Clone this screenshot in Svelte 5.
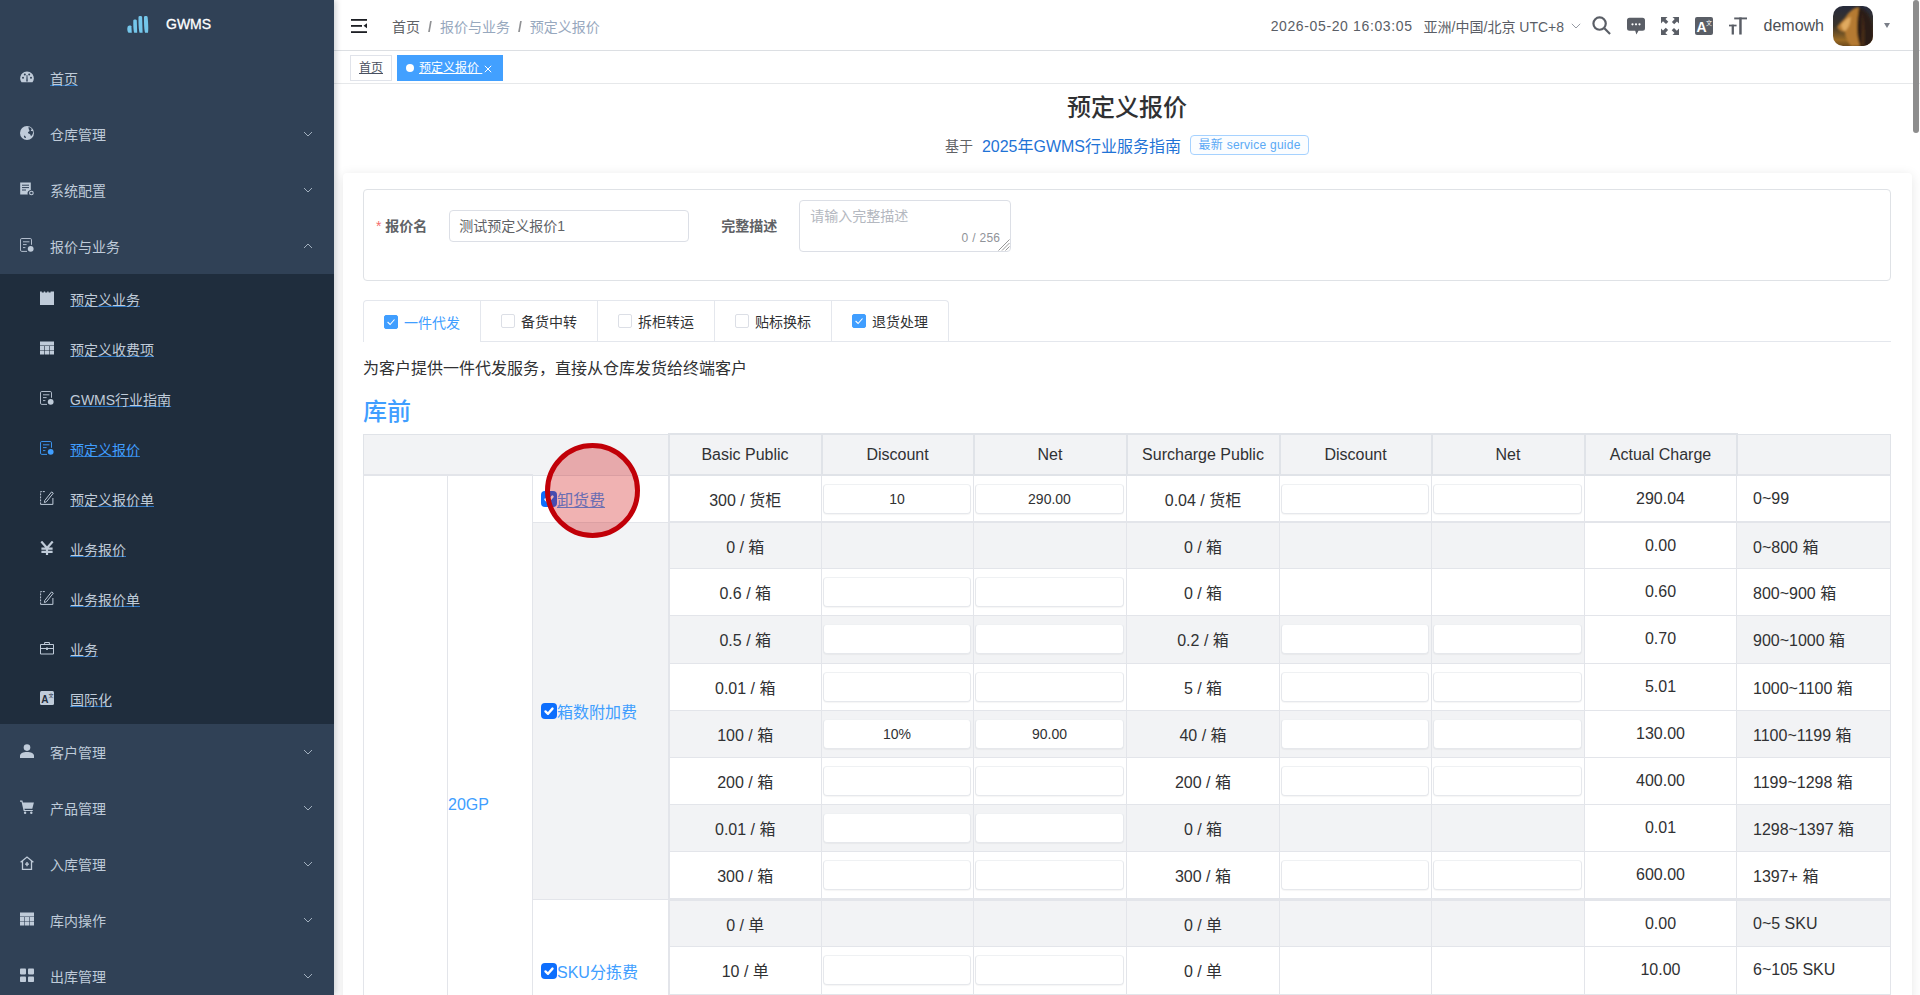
<script lang="ts">
  const topMenu = [
    { label: '首页', icon: 'gauge', link: true },
    { label: '仓库管理', icon: 'globe', arrow: 'down' },
    { label: '系统配置', icon: 'docgear', arrow: 'down' },
    { label: '报价与业务', icon: 'docline', arrow: 'up' }
  ];
  const subMenu = [
    { label: '预定义业务', icon: 'calendar' },
    { label: '预定义收费项', icon: 'grid' },
    { label: 'GWMS行业指南', icon: 'docline' },
    { label: '预定义报价', icon: 'docline', active: true },
    { label: '预定义报价单', icon: 'edit' },
    { label: '业务报价', icon: 'yen' },
    { label: '业务报价单', icon: 'edit' },
    { label: '业务', icon: 'case' },
    { label: '国际化', icon: 'lang' }
  ];
  const bottomMenu = [
    { label: '客户管理', icon: 'user' },
    { label: '产品管理', icon: 'cart' },
    { label: '入库管理', icon: 'house' },
    { label: '库内操作', icon: 'grid' },
    { label: '出库管理', icon: 'blocks' }
  ];
  const tabs = [
    { label: '一件代发', checked: true, active: true },
    { label: '备货中转' },
    { label: '拆柜转运' },
    { label: '贴标换标' },
    { label: '退货处理', checked: true }
  ];
  const columns = ['Basic Public', 'Discount', 'Net', 'Surcharge Public', 'Discount', 'Net', 'Actual Charge', ''];

  interface Row {
    basic: string;
    disc?: string;
    net?: string;
    sur: string;
    actual: string;
    range: string;
    grey?: boolean;
  }
  const blank = (grey: boolean): Row => ({ basic: '', sur: '', actual: '', range: '', grey });
  const groups: { name: string; grey?: boolean; hot?: boolean; rows: Row[] }[] = [
    {
      name: '卸货费',
      hot: true,
      rows: [{ basic: '300 / 货柜', disc: '10', net: '290.00', sur: '0.04 / 货柜', actual: '290.04', range: '0~99' }]
    },
    {
      name: '箱数附加费',
      grey: true,
      rows: [
        { basic: '0 / 箱', sur: '0 / 箱', actual: '0.00', range: '0~800 箱', grey: true },
        { basic: '0.6 / 箱', sur: '0 / 箱', actual: '0.60', range: '800~900 箱' },
        { basic: '0.5 / 箱', sur: '0.2 / 箱', actual: '0.70', range: '900~1000 箱', grey: true },
        { basic: '0.01 / 箱', sur: '5 / 箱', actual: '5.01', range: '1000~1100 箱' },
        { basic: '100 / 箱', disc: '10%', net: '90.00', sur: '40 / 箱', actual: '130.00', range: '1100~1199 箱', grey: true },
        { basic: '200 / 箱', sur: '200 / 箱', actual: '400.00', range: '1199~1298 箱' },
        { basic: '0.01 / 箱', sur: '0 / 箱', actual: '0.01', range: '1298~1397 箱', grey: true },
        { basic: '300 / 箱', sur: '300 / 箱', actual: '600.00', range: '1397+ 箱' }
      ]
    },
    {
      name: 'SKU分拣费',
      rows: [
        { basic: '0 / 单', sur: '0 / 单', actual: '0.00', range: '0~5 SKU', grey: true },
        { basic: '10 / 单', sur: '0 / 单', actual: '10.00', range: '6~105 SKU' },
        blank(true)
      ]
    },
    { name: '', rows: [blank(false), blank(true)] }
  ];
  const totalRows = groups.reduce((n, g) => n + g.rows.length, 0);
  const hasInput = (v: string) => v !== '' && !v.startsWith('0 /');
</script>

{#snippet icon(name)}
  <svg class="icon" viewBox="0 0 14 14" fill="currentColor">
    {#if name === 'gauge'}
      <path d="M7 1.5C3.2 1.5.2 4.6.2 8.3c0 1.5.5 2.9 1.3 4h11c.8-1.1 1.3-2.5 1.3-4 0-3.7-3-6.800-6.800-6.800z" />
      <g fill="#304156"><circle cx="3" cy="7.8" r="1" /><circle cx="4.8" cy="4.6" r="1" /><circle cx="9.2" cy="4.6" r="1" /><circle cx="11" cy="7.8" r="1" /><path d="M6.2 11.6 6.6 5h.8l.4 6.6z" /></g>
    {:else if name === 'globe'}
      <circle cx="7" cy="7" r="7" />
      <path fill="#304156" d="M8.5 1c1.5.3 2.7 1.100 3.500 2.300-.8.3-1.300.7-1.100 1.300.3.7 1.500.6 2.300 1 .1 1.900-.8 3.500-2.200 4.600-.4-1-.4-1.800-1.300-2.300-.8-.4-1.500-.3-1.700-1-.2-.6.4-1 1-1.300.6-.3.6-.9.2-1.500-.3-.6-.7-1.400-.7-3.100z" />
      <path fill="#304156" d="M4 9.500c1 .3 1.800.9 2 2.200-.6.3-1.300.3-1.700-.2-.4-.5-.5-1.200-.3-2z" />
    {:else if name === 'docgear'}
      <path d="M.2 .6h10.600v7.300a3.300 3.300 0 0 0-3 4.700H.2z" />
      <path stroke="#304156" stroke-width="1" d="M2 3.200h7M2 5.600h7M2 8h4" />
      <circle cx="11.400" cy="11" r="1.800" fill="none" stroke="currentColor" stroke-width="1.100" />
    {:else if name === 'docline'}
      <path fill="none" stroke="currentColor" stroke-width=".9" d="M7 13.400H1.800a1.300 1.300 0 0 1-1.300-1.300V1.800A1.300 1.300 0 0 1 1.800.5h8.400a1.300 1.300 0 0 1 1.300 1.300v5M3 3.800h6.400M3 6.600h3.600M3 9.600h2.400" />
      <circle cx="10.700" cy="10.800" r="2.900" />
    {:else if name === 'calendar'}
      <path d="M0 .4h1.800v1.200h2V.4h1.400v1.200h2V.4h1.400v1.200h2V.4H14v13.600H0z" />
    {:else if name === 'grid'}
      <path d="M0 .5h14v3.900H0zM0 5h4.400v4H0zM5 5h4v4H5zM9.600 5H14v4H9.600zM0 9.600h4.400v3.900H0zM5 9.600h4v3.900H5zM9.600 9.600H14v3.900H9.600z" />
    {:else if name === 'edit'}
      <path fill="none" stroke="currentColor" stroke-width="1" stroke-dasharray="2 1" d="M.6 13.400V.6h5" />
      <path fill="none" stroke="currentColor" stroke-width="1" d="M.6 13.400h12.300V7M4.700 9.600 11.600.9l1.700 1.300-7 8.700-1.900.6z" />
    {:else if name === 'yen'}
      <path fill="none" stroke="currentColor" stroke-width="2.200" d="M1.300.5 7 7 12.700.5M7 7v7M1.400 7.700h11.200M1.400 10.800h11.200" />
    {:else if name === 'case'}
      <path fill="none" stroke="currentColor" stroke-width="1" d="M.5 3.500h13v9.500H.5zM4.600 3.500V1.500h4.800v2M.5 7.500h13" />
      <rect x="6" y="6.500" width="2" height="2.400" />
    {:else if name === 'lang'}
      <rect width="14" height="14" rx="1.500" />
      <text class="lang-a" x="1.200" y="11.600">A</text>
      <text class="lang-b" x="8.400" y="6">文</text>
    {:else if name === 'user'}
      <circle cx="7" cy="3.600" r="3.300" />
      <path d="M0 14v-2.100C0 9.500 3 8 7 8s7 1.500 7 3.900V14z" />
    {:else if name === 'cart'}
      <path d="M0 .6h2.400l.5 1.800h11l-1.600 6.300H4.400l.4 1.200h8v1.200H3.700L1.500 1.800H0z" />
      <circle cx="5.100" cy="12.700" r="1.200" /><circle cx="11.300" cy="12.700" r="1.200" />
    {:else if name === 'house'}
      <path fill="none" stroke="currentColor" stroke-width="1.300" d="M.6 6.200 7 1l6.400 5.200M2.500 5v8.300h9V5" />
      <path d="M5 7.500h4v1.300H5zM6.300 6h1.400v4.200H6.300z" />
    {:else if name === 'blocks'}
      <rect width="6" height="6" y=".4" rx=".8" /><rect x="8" y=".4" width="6" height="6" rx=".8" />
      <rect y="8.400" width="6" height="5.600" rx=".8" /><rect x="8" y="8.400" width="6" height="5.600" rx=".8" />
    {/if}
  </svg>
{/snippet}

{#snippet menuItem(item)}
  <div class="menu-item">
    {@render icon(item.icon)}
    <span class:linked={item.link}>{item.label}</span>
    {#if item.arrow === 'up'}
      <svg class="arrow" viewBox="0 0 10 6" fill="none" stroke="currentColor"><path d="M1 5l4-4 4 4" /></svg>
    {:else if item.arrow !== undefined}
      <svg class="arrow" viewBox="0 0 10 6" fill="none" stroke="currentColor"><path d="M1 1l4 4 4-4" /></svg>
    {/if}
  </div>
{/snippet}

{#snippet tick()}
  <span class="tick"><svg viewBox="0 0 16 16" fill="none" stroke="#fff" stroke-width="2.400" stroke-linecap="round" stroke-linejoin="round"><path d="M4.500 8.400l2.500 2.400 4.500-5.200" /></svg></span>
{/snippet}

<div class="app">
  <aside class="sidebar">
    <div class="logo">
      <svg class="logo-mark" viewBox="0 0 22 17" fill="#74c6ea">
        <path d="M.8 10.500c.8-1.100 3.400-1.300 3.600-.2l.4 6.400H1.600C.5 16.700-.3 12.500.8 10.500z" />
        <path d="M6.300 4.500c0-1.200 3.300-1.400 3.500 0l.4 12.200H7.200c-.9-2.600-1-9.200-.9-12.200z" />
        <path d="M11.500 1c0-1.200 3.400-1.300 3.600 0l.5 15.700h-3c-1-3-1.200-12-1.100-15.700z" />
        <path d="M17 1c0-1.200 3.400-1.300 3.600 0 .5 4 1 11.500.4 15.700h-2.900c-1-3-1.200-12-1.100-15.700z" />
      </svg>
      <span>GWMS</span>
    </div>
    {#each topMenu as item}
      {@render menuItem(item)}
    {/each}
    <div class="submenu">
      {#each subMenu as item}
        <div class="sub-item" class:active={item.active}>
          {@render icon(item.icon)}
          <span>{item.label}</span>
        </div>
      {/each}
    </div>
    {#each bottomMenu as item}
      {@render menuItem({ ...item, arrow: 'down' })}
    {/each}
  </aside>

  <div class="main">
    <header class="navbar">
      <svg class="hamburger" viewBox="0 0 16 14" fill="#1d1f24">
        <rect width="16" height="1.800" /><rect y="6" width="11" height="1.800" /><rect y="12.200" width="16" height="1.800" />
        <path d="M16 4.200v5l-3.500-2.500z" />
      </svg>
      <nav class="crumbs">
        <span class="crumb-home">首页</span><i>/</i><span>报价与业务</span><i>/</i><span>预定义报价</span>
      </nav>
      <div class="nav-right">
        <span class="clock">2026-05-20 16:03:05</span>
        <span class="zone">亚洲/中国/北京 UTC+8</span>
        <svg class="zone-arrow" viewBox="0 0 10 6" fill="none" stroke="currentColor"><path d="M.8 .8 5 5 9.200 .8" /></svg>
        <svg class="tool search" viewBox="0 0 20 20" fill="none" stroke="#5a5e66" stroke-width="2.300">
          <circle cx="8" cy="8" r="6.500" /><path d="M13 13l6 6" />
        </svg>
        <svg class="tool" viewBox="0 0 18 18" fill="#5a5e66">
          <path d="M2.500 .8h13a2.500 2.500 0 0 1 2.500 2.500v8a2.500 2.500 0 0 1-2.500 2.500h-4L9.400 17.600 8.200 13.800H2.500A2.500 2.500 0 0 1 0 11.300v-8A2.500 2.500 0 0 1 2.500 .8z" />
          <g fill="#fff"><circle cx="5.500" cy="7.300" r="1.100" /><circle cx="9" cy="7.300" r="1.100" /><circle cx="12.500" cy="7.300" r="1.100" /></g>
        </svg>
        <svg class="tool" viewBox="0 0 18 18" fill="#5a5e66">
          <path d="M0 0h6.500L4.500 2l2.800 2.800-2.300 2.300L2 4.300 0 6.500zM18 0v6.500L16 4.500l-2.800 2.800-2.300-2.300L13.700 2 11.500 0zM0 18v-6.500L2 13.500l2.800-2.800 2.300 2.300L4.300 16l2.200 2zM18 18h-6.500l2-2-2.800-2.800 2.300-2.300 2.800 2.800 2.200-2.200z" />
        </svg>
        <svg class="tool" viewBox="0 0 18 18">
          <rect width="18" height="18" rx="2" fill="#5a5e66" />
          <text class="tool-a" x="1.600" y="15">A</text>
          <text class="tool-b" x="11" y="7.500">文</text>
        </svg>
        <svg class="tool" viewBox="0 0 19 18" fill="#5a5e66">
          <rect x="5.500" width="13.500" height="2" /><rect x="10.800" width="2.600" height="18" />
          <rect y="7.600" width="8" height="1.800" /><rect x="2.800" y="7.600" width="2.400" height="10.400" />
        </svg>
        <span class="username">demowh</span>
        <svg class="avatar" viewBox="0 0 40 40">
          <defs>
            <linearGradient id="bg" x1="0" y1="0" x2="0" y2="1">
              <stop offset="0" stop-color="#272b3c" /><stop offset=".5" stop-color="#3a3329" /><stop offset=".85" stop-color="#9a6a24" /><stop offset="1" stop-color="#6e4a1c" />
            </linearGradient>
            <filter id="soft"><feGaussianBlur stdDeviation="1" /></filter>
          </defs>
          <rect width="40" height="40" fill="url(#bg)" />
          <g filter="url(#soft)">
            <path fill="#2c1c12" d="M20 2C30 0 42 6 41 42H20z" />
            <path fill="#b57a30" d="M26 1c-6 1-11 6-14 11-3 3-6 6-8 9 2 4 5 5 8 5 0 5 3 10 6 14h9c-2-6-3-12-3-18 0-7 1-14 2-21z" />
            <path fill="#e0aa60" d="M8 19c3-4 6-7 10-8-1 5-1 10-6 14-2 0-3-3-4-6z" />
            <path fill="#4d3018" d="M29 6c2 8 3 22 2 34h-3c1-10 2-24 1-34z" />
          </g>
        </svg>
        <span class="caret"></span>
      </div>
    </header>

    <div class="tagbar">
      <span class="tag">首页</span>
      <span class="tag current"><b></b><u>预定义报价&nbsp;</u><svg viewBox="0 0 8 8" fill="none" stroke="#fff"><path d="M.8 .8l6.400 6.400M7.200 .8.800 7.200" /></svg></span>
    </div>

    <div class="page-head">
      <h1>预定义报价</h1>
      <div class="subtitle">
        <span class="based">基于</span>
        <span class="guide">2025年GWMS行业服务指南</span>
        <span class="guide-tag">最新 service guide</span>
      </div>
    </div>

    <section class="card">
      <div class="form">
        <span class="label"><em>*</em> 报价名</span>
        <div class="input">测试预定义报价1</div>
        <span class="label second">完整描述</span>
        <div class="textarea">
          <span class="placeholder">请输入完整描述</span>
          <span class="count">0 / 256</span>
          <svg class="resize" viewBox="0 0 12 12" stroke="#8a8a8a" stroke-width=".9"><path d="M11.500 .5l-11 11M11.500 4l-7.500 7.500M11.500 7.500l-4 4" /></svg>
        </div>
      </div>

      <div class="tabs">
        {#each tabs as tab}
          <div class="tab" class:active={tab.active}>
            <span class="check" class:on={tab.checked}>
              {#if tab.checked}
                <svg viewBox="0 0 14 14" fill="none" stroke="#fff" stroke-width="1.100"><path d="M3.600 7l2.500 2.500 4.400-5" /></svg>
              {/if}
            </span>
            {tab.label}
          </div>
        {/each}
      </div>

      <p class="intro">为客户提供一件代发服务，直接从仓库发货给终端客户</p>
      <h2>库前</h2>

      <table>
        <colgroup>
          <col style="width:84px" /><col style="width:85px" /><col style="width:136px" />
          <col style="width:153px" /><col style="width:152px" /><col style="width:153px" /><col style="width:153px" />
          <col style="width:152px" /><col style="width:153px" /><col style="width:152px" /><col style="width:154px" />
        </colgroup>
        <thead>
          <tr>
            <th colspan="3"></th>
            {#each columns as c}<th>{c}</th>{/each}
          </tr>
        </thead>
        <tbody>
          {#each groups as group, gi}
            {#each group.rows as row, ri}
              <tr class:striped={row.grey} class:first={ri === 0} class:heavy={ri === 0 && gi === 2}>
                {#if gi === 0 && ri === 0}
                  <td rowspan={totalRows} class="plain"></td>
                  <td rowspan={totalRows} class="plain size">20GP</td>
                {/if}
                {#if ri === 0}
                  <td rowspan={group.rows.length} class="fee" class:shade={group.grey} class:hot={group.hot}>
                    {#if group.name}
                      {@render tick()}<span>{group.name}</span>
                    {/if}
                  </td>
                {/if}
                <td>{row.basic}</td>
                <td class="slot">{#if hasInput(row.basic)}<div class="cell-input">{row.disc ?? ''}</div>{/if}</td>
                <td class="slot">{#if hasInput(row.basic)}<div class="cell-input">{row.net ?? ''}</div>{/if}</td>
                <td>{row.sur}</td>
                <td class="slot">{#if hasInput(row.sur)}<div class="cell-input"></div>{/if}</td>
                <td class="slot">{#if hasInput(row.sur)}<div class="cell-input"></div>{/if}</td>
                <td class="actual">{row.actual}</td>
                <td class="range">{row.range}</td>
              </tr>
            {/each}
          {/each}
        </tbody>
      </table>
    </section>
  </div>

  <div class="ring"></div>
  <div class="scroll-thumb"></div>
</div>

<style>
  :global(body) {
    margin: 0;
    background: #fff;
  }
  .app {
    position: relative;
    display: flex;
    width: 1920px;
    height: 995px;
    overflow: hidden;
    font-family: "Liberation Sans", "Noto Sans CJK SC", sans-serif;
    color: #303133;
  }
  .sidebar {
    flex: 0 0 334px;
    background: #304156;
    color: #bfcbd9;
    font-size: 14px;
    box-shadow: 2px 0 6px rgba(0, 21, 41, 0.2);
    z-index: 2;
  }
  .logo {
    height: 50px;
    display: flex;
    align-items: center;
    padding-left: 127px;
    gap: 17px;
    color: #fff;
    font-weight: 400;
  }
  .logo-mark {
    width: 22px;
    height: 17px;
    margin-top: -1px;
  }
  .logo span {
    margin-top: -2px;
    -webkit-text-stroke: 0.3px #fff;
  }
  .menu-item {
    height: 56px;
    display: flex;
    align-items: center;
    padding-left: 20px;
  }
  .icon {
    width: 14px;
    height: 14px;
    margin-right: 16px;
    flex: none;
    margin-top: -2px;
  }
  .linked,
  .sub-item span {
    text-decoration: underline;
    text-decoration-color: #2f78c4;
    text-underline-offset: 1px;
  }
  .arrow {
    width: 10px;
    height: 6px;
    margin-left: auto;
    margin-right: 21px;
    stroke-width: 0.8;
  }
  .submenu {
    background: #1f2d3d;
  }
  .sub-item {
    height: 50px;
    display: flex;
    align-items: center;
    padding-left: 40px;
  }
  .sub-item.active {
    color: #409eff;
  }
  .lang-a {
    font-size: 10px;
    font-weight: 700;
    fill: #1f2d3d;
  }
  .lang-b {
    font-size: 5px;
    fill: #1f2d3d;
  }

  .main {
    flex: 1;
    min-width: 0;
  }
  .navbar {
    height: 50px;
    border-bottom: 1px solid #dcdfe3;
    display: flex;
    align-items: center;
    font-size: 14px;
  }
  .hamburger {
    width: 16px;
    height: 14px;
    margin-left: 17px;
    margin-top: 2px;
  }
  .crumbs {
    margin-left: 25px;
    margin-top: 1px;
    color: #97a8be;
  }
  .crumbs i {
    font-style: normal;
    color: #606266;
    margin: 0 8px;
    font-weight: 600;
    opacity: 0.7;
  }
  .crumb-home {
    color: #606266;
  }
  .nav-right {
    margin-left: auto;
    display: flex;
    align-items: center;
    color: #5a5e66;
    margin-top: 1px;
  }
  .clock {
    letter-spacing: 0.63px;
  }
  .zone {
    margin-left: 11px;
  }
  .zone-arrow {
    width: 10px;
    height: 6px;
    margin-left: 7px;
    stroke-width: 0.9;
    color: #8a8f98;
  }
  .tool {
    width: 18px;
    height: 18px;
    margin-left: 16px;
  }
  .search {
    margin-left: 11px;
    width: 19px;
    height: 19px;
  }
  .tool-a {
    font-size: 14px;
    font-weight: 700;
    fill: #fff;
  }
  .tool-b {
    font-size: 6px;
    fill: #fff;
  }
  .username {
    font-size: 16px;
    margin-left: 16.5px;
    color: #4c4f55;
  }
  .avatar {
    width: 40px;
    height: 40px;
    border-radius: 10px;
    margin-left: 9px;
  }
  .caret {
    width: 0;
    height: 0;
    border: 3.5px solid transparent;
    border-top: 5px solid #7a7f88;
    border-bottom: 0;
    margin-left: 11px;
    margin-right: 30px;
  }
  .tagbar {
    height: 28px;
    border-bottom: 1px solid #e6e8ea;
    display: flex;
    align-items: flex-start;
    padding: 4px 0 0 16px;
    gap: 5px;
  }
  .tag {
    height: 26px;
    box-sizing: border-box;
    border: 1px solid #e0e3ea;
    font-size: 12px;
    line-height: 24px;
    padding: 0 8px;
    text-decoration: underline;
    color: #495060;
    width: 42px;
    text-align: center;
    white-space: nowrap;
  }
  .tag.current {
    width: 106px;
    background: #42a0ff;
    border-color: #42a0ff;
    color: #fff;
    text-align: left;
    display: flex;
    align-items: center;
    text-decoration: none;
  }
  .tag.current b {
    width: 8px;
    height: 8px;
    border-radius: 50%;
    background: #fff;
    margin-right: 5px;
    flex: none;
  }
  .tag.current svg {
    width: 8px;
    height: 8px;
    margin-left: 2px;
    margin-top: 2px;
  }
  .page-head {
    height: 89px;
    text-align: center;
    padding-top: 10px;
    box-sizing: border-box;
  }
  h1 {
    margin: 0;
    font-size: 24px;
    line-height: 28px;
    font-weight: 500;
    color: #303133;
  }
  .subtitle {
    margin-top: 11px;
    height: 24px;
    display: flex;
    justify-content: center;
    align-items: center;
  }
  .based {
    font-size: 14px;
    color: #606266;
    margin-right: 9px;
  }
  .guide {
    font-size: 16px;
    color: #1f73d6;
    margin-right: 9px;
  }
  .guide-tag {
    height: 20px;
    line-height: 18px;
    box-sizing: border-box;
    border: 1px solid #a6d2ff;
    border-radius: 4px;
    background: #fbfdff;
    color: #5aa9f5;
    font-size: 12px;
    padding: 0 7.5px;
    letter-spacing: 0.25px;
  }
  .card {
    margin: 0 8px 0 9px;
    padding: 16px 21px 0 20px;
    background: #fff;
    border-radius: 4px;
    box-shadow: 0 2px 12px rgba(0, 0, 0, 0.1);
  }
  .form {
    height: 92px;
    box-sizing: border-box;
    border: 1px solid #dfe2e6;
    border-radius: 4px;
    display: flex;
    align-items: flex-start;
    padding: 10px 0 0 12px;
  }
  .label {
    font-size: 14px;
    font-weight: 700;
    color: #606266;
    line-height: 52px;
    white-space: nowrap;
  }
  .label em {
    font-style: normal;
    color: #f56c6c;
    font-weight: 400;
  }
  .second {
    margin-left: 32px;
  }
  .input {
    width: 240px;
    height: 32px;
    margin: 10px 0 0 22px;
    box-sizing: border-box;
    border: 1px solid #dcdfe6;
    border-radius: 4px;
    padding: 0 9px;
    font-size: 14px;
    line-height: 31px;
    color: #606266;
  }
  .textarea {
    position: relative;
    width: 212px;
    height: 52px;
    margin-left: 22px;
    box-sizing: border-box;
    border: 1px solid #dcdfe6;
    border-radius: 4px;
    padding: 5px 10px;
    font-size: 14px;
    line-height: 21px;
    color: #b4b8c0;
  }
  .count {
    position: absolute;
    right: 10px;
    bottom: 4px;
    font-size: 12px;
    line-height: 18px;
    color: #909399;
    letter-spacing: 0.3px;
  }
  .resize {
    position: absolute;
    right: 0;
    bottom: 0;
    width: 12px;
    height: 12px;
  }
  .tabs {
    margin-top: 19px;
    height: 42px;
    box-sizing: border-box;
    border-bottom: 1px solid #e4e7ed;
    display: flex;
  }
  .tab {
    width: 117px;
    height: 41px;
    box-sizing: border-box;
    border: 1px solid #e4e7ed;
    border-left: 0;
    border-bottom: 0;
    display: flex;
    align-items: center;
    justify-content: center;
    font-size: 14px;
    color: #303133;
    gap: 6px;
  }
  .tab:first-child {
    width: 118px;
    border-left: 1px solid #e4e7ed;
    border-top-left-radius: 4px;
  }
  .tab:last-child {
    border-top-right-radius: 4px;
  }
  .tab.active {
    color: #409eff;
    height: 42px;
    background: #fff;
  }
  .check {
    width: 14px;
    height: 14px;
    box-sizing: border-box;
    border: 1px solid #dcdfe6;
    border-radius: 2px;
    background: #fff;
    display: block;
  }
  .check.on {
    background: #409eff;
    border-color: #409eff;
  }
  .check svg {
    display: block;
    width: 14px;
    height: 14px;
    margin: -1px;
  }
  .intro {
    margin: 15px 0 0;
    font-size: 16px;
    line-height: 24px;
    color: #303133;
  }
  h2 {
    margin: 15px 0 0;
    font-size: 24px;
    line-height: 32px;
    font-weight: 500;
    color: #409eff;
  }
  table {
    margin-top: 5px;
    width: 1527px;
    table-layout: fixed;
    border-collapse: collapse;
    font-size: 16px;
    color: #303133;
    border: 1px solid #e0e3e8;
  }
  th {
    height: 39px;
    padding: 0;
    background: #f2f3f5;
    font-weight: 400;
    border: 2px solid #e0e3e8;
  }
  th:first-child,
  th:last-child {
    border-width: 1px;
  }
  td {
    height: 46.15px;
    padding: 0;
    text-align: center;
    border: 1px solid #e3e5ea;
    background: #fff;
  }
  tr.striped td {
    background: #f2f3f5;
  }
  tr.first td {
    border-top-width: 2px;
    height: 45.15px;
  }
  tr.heavy td {
    border-top-width: 3px;
  }
  tr td.actual {
    background: #fff;
  }
  td.plain,
  tr.striped td.plain {
    background: #fff;
    text-align: left;
    border-top-width: 1px;
  }
  .size {
    color: #409eff;
  }
  .fee {
    text-align: left;
    color: #409eff;
    padding-left: 8px;
    white-space: nowrap;
    background: #fff;
    border-right-width: 2px;
  }
  tr.first td.fee {
    border-top-width: 1px;
  }
  tr.striped td.fee {
    background: #fff;
  }
  tr.striped td.fee.shade,
  td.fee.shade {
    background: #f2f3f5;
  }
  .fee span:last-child {
    vertical-align: middle;
  }
  .fee.hot span:last-child {
    text-decoration: underline;
  }
  .tick {
    display: inline-block;
    width: 16px;
    height: 16px;
    border-radius: 4px;
    background: #0d6efd;
    vertical-align: middle;
  }
  .tick svg {
    display: block;
  }
  .slot {
    padding: 0 2px 0 1px;
  }
  .cell-input {
    height: 30px;
    box-sizing: border-box;
    border-radius: 4px;
    background: #fff;
    border: 1px solid #e6e8ec;
    border-top-color: #eff1f3;
    box-shadow: 0 1px 1px rgba(0, 0, 0, 0.04);
    font-size: 14px;
    line-height: 29px;
  }
  .range {
    text-align: left;
    padding-left: 16px;
    white-space: nowrap;
  }
  .ring {
    position: absolute;
    left: 545px;
    top: 443px;
    width: 95px;
    height: 95px;
    box-sizing: border-box;
    border-radius: 50%;
    border: 5px solid #c10008;
    background: rgba(204, 0, 0, 0.3);
    z-index: 3;
  }
  .scroll-thumb {
    position: absolute;
    right: 1px;
    top: 0;
    width: 6px;
    height: 133px;
    border-radius: 3px;
    background: #8d8d8d;
    z-index: 3;
  }
</style>
